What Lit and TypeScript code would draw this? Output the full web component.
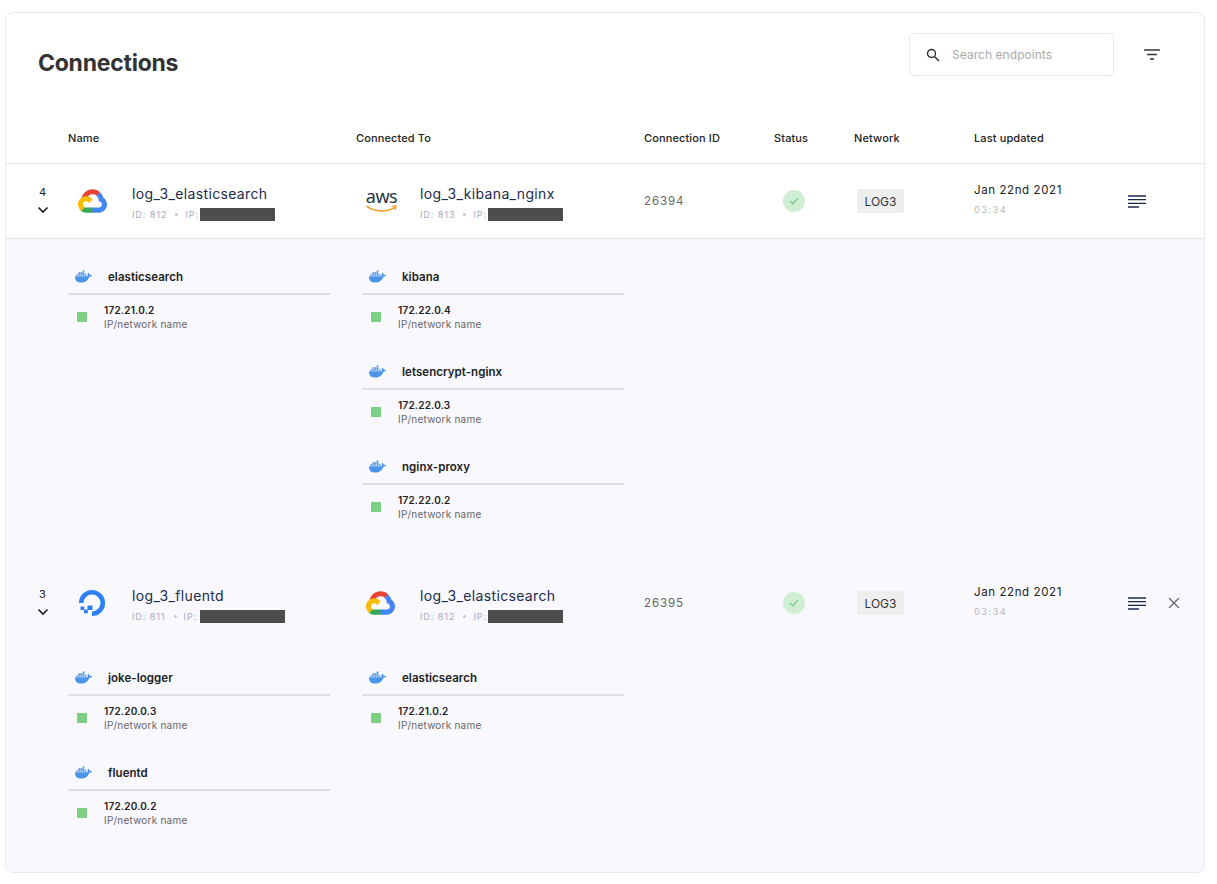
import { LitElement, html, css, svg } from "lit";
import { customElement } from "lit/decorators.js";

const gcp = html`<svg class="gcp" viewBox="0 0 256 206"><path fill="#EA4335" d="M170.252 56.819l22.253-22.253 1.483-9.37C153.437-11.677 88.976-7.496 52.42 33.92 42.267 45.423 34.734 59.764 30.717 74.573l7.97-1.123 44.505-7.34 3.436-3.513c19.797-21.742 53.27-24.667 76.128-6.168l7.496.39z"/><path fill="#4285F4" d="M224.205 73.918c-5.115-18.836-15.616-35.769-30.217-48.722l-31.232 31.232c13.188 10.776 20.701 27.01 20.379 44.037v5.544c15.351 0 27.797 12.445 27.797 27.796 0 15.352-12.446 27.485-27.797 27.485h-55.671l-5.466 5.934v33.34l5.466 5.231h55.671c39.93.311 72.552-31.494 72.863-71.424.188-24.203-11.745-46.893-31.793-60.453"/><path fill="#34A853" d="M71.87 205.796h55.593V161.29H71.87c-3.961-.001-7.797-.852-11.399-2.498l-7.887 2.42-22.409 22.253-1.952 7.574c12.567 9.489 27.9 14.825 43.647 14.757"/><path fill="#FBBC05" d="M71.87 61.425C31.94 61.664-.237 94.228.001 134.159c.133 22.298 10.547 43.288 28.222 56.881l32.248-32.248c-13.991-6.321-20.208-22.786-13.887-36.776 6.32-13.99 22.786-20.207 36.775-13.887 6.161 2.784 11.095 7.719 13.88 13.887l32.248-32.248C115.21 71.375 94.28 61.315 71.87 61.425"/></svg>`;

const aws = html`<span class="aws"><span class="aws-t">aws</span><svg viewBox="0 0 32 8"><path d="M1 1.2C9 7 21 7.6 29.5 2.6" fill="none" stroke="#f79c1f" stroke-width="1.6" stroke-linecap="round"/><path d="M26.4 1.4L31 .9 30 5" fill="none" stroke="#f79c1f" stroke-width="1.3"/></svg></span>`;

const dgo = html`<svg class="dgo" viewBox="0 0 28 28"><path d="M3.2 14A10.8 10.8 0 1 1 14 24.8" fill="none" stroke="#2f80f6" stroke-width="4.6"/><rect x="9.500" y="16.500" width="5" height="4.500" fill="#2f80f6"/><rect x="6" y="20.500" width="3.800" height="3.800" fill="#2f80f6"/><rect x="2.500" y="17.500" width="3.800" height="3.500" fill="#2f80f6"/></svg>`;

const dockerPath = "M13.983 11.078h2.119a.186.186 0 00.186-.185V9.006a.186.186 0 00-.186-.186h-2.119a.185.185 0 00-.185.185v1.888c0 .102.083.185.185.185m-2.954-5.43h2.118a.186.186 0 00.186-.186V3.574a.186.186 0 00-.186-.185h-2.118a.185.185 0 00-.185.185v1.888c0 .102.082.185.185.186m0 2.716h2.118a.187.187 0 00.186-.186V6.29a.186.186 0 00-.186-.185h-2.118a.185.185 0 00-.185.185v1.887c0 .102.082.185.185.186m-2.93 0h2.12a.186.186 0 00.184-.186V6.29a.185.185 0 00-.185-.185H8.1a.185.185 0 00-.185.185v1.887c0 .102.083.185.185.186m-2.964 0h2.119a.186.186 0 00.185-.186V6.29a.185.185 0 00-.185-.185H5.136a.186.186 0 00-.186.185v1.887c0 .102.084.185.186.186m5.893 2.715h2.118a.186.186 0 00.186-.185V9.006a.186.186 0 00-.186-.186h-2.118a.185.185 0 00-.185.185v1.888c0 .102.082.185.185.185m-2.93 0h2.12a.185.185 0 00.184-.185V9.006a.185.185 0 00-.184-.186h-2.12a.185.185 0 00-.184.185v1.888c0 .102.083.185.185.185m-2.964 0h2.119a.185.185 0 00.185-.185V9.006a.185.185 0 00-.184-.186h-2.12a.186.186 0 00-.186.186v1.887c0 .102.084.185.186.185m-2.92 0h2.12a.185.185 0 00.184-.185V9.006a.185.185 0 00-.184-.186h-2.12a.185.185 0 00-.184.185v1.888c0 .102.082.185.185.185M23.763 9.89c-.065-.051-.672-.51-1.954-.51-.338.001-.676.03-1.01.087-.248-1.7-1.653-2.53-1.716-2.566l-.344-.199-.226.327c-.284.438-.49.922-.612 1.43-.23.97-.09 1.882.403 2.661-.595.332-1.55.413-1.744.42H.751a.751.751 0 00-.75.748 11.376 11.376 0 00.692 4.062c.545 1.428 1.355 2.48 2.41 3.124 1.18.723 3.1 1.137 5.275 1.137.983.003 1.963-.086 2.93-.266a12.248 12.248 0 003.823-1.389c.98-.567 1.86-1.288 2.61-2.136 1.252-1.418 1.998-2.997 2.553-4.4h.221c1.372 0 2.215-.549 2.68-1.009.309-.293.55-.65.707-1.046l.098-.288Z";
const docker = svg`<path d=${dockerPath} fill="#4a94ea"/>`;

type Ep = { logo: unknown; name: string; id: number; redact: number };
type Group = { name: string; ip: string };
type Conn = {
  count: number; from: Ep; to: Ep; cid: number; close: boolean; shaded: boolean;
  left: Group[]; right: Group[];
};

const data: Conn[] = [
  {
    count: 4, cid: 26394, close: false, shaded: false,
    from: { logo: gcp, name: "log_3_elasticsearch", id: 812, redact: 75 },
    to: { logo: aws, name: "log_3_kibana_nginx", id: 813, redact: 75 },
    left: [{ name: "elasticsearch", ip: "172.21.0.2" }],
    right: [
      { name: "kibana", ip: "172.22.0.4" },
      { name: "letsencrypt-nginx", ip: "172.22.0.3" },
      { name: "nginx-proxy", ip: "172.22.0.2" },
    ],
  },
  {
    count: 3, cid: 26395, close: true, shaded: true,
    from: { logo: dgo, name: "log_3_fluentd", id: 811, redact: 85 },
    to: { logo: gcp, name: "log_3_elasticsearch", id: 812, redact: 75 },
    left: [
      { name: "joke-logger", ip: "172.20.0.3" },
      { name: "fluentd", ip: "172.20.0.2" },
    ],
    right: [{ name: "elasticsearch", ip: "172.21.0.2" }],
  },
];

@customElement("app-root")
export class AppRoot extends LitElement {
  static styles = css`
    :host { display: block; font-family: Inter, "Liberation Sans", sans-serif; color: #222; }
    .card { margin: 12px 12px 11px 5px; border: 1px solid #e9e9f1; border-radius: 8px; background: #fff; overflow: hidden; }
    .top { height: 99px; display: flex; padding-left: 32px; box-sizing: border-box; }
    h1 { margin: 36px 0 0; font-size: 23px; line-height: 28px; font-weight: 700; color: #333; letter-spacing: -0.25px; flex: 1; }
    .search { margin-top: 20px; width: 205px; height: 43px; box-sizing: border-box; border: 1px solid #ebebef; border-radius: 4px; display: flex; align-items: center; padding-left: 16px; gap: 12px; font-size: 12px; color: #aaa; letter-spacing: 0.05px; }
    .search svg { width: 14px; height: 14px; flex: none; }
    .filter { margin: 35px 44px 0 30px; width: 16px; height: 14px; flex: none; }
    .grid { display: grid; grid-template-columns: 62px 288px 288px 130px 80px 120px 154px 1fr; align-items: center; }
    .head { height: 51px; border-bottom: 1px solid #e3e3e8; font-size: 11px; font-weight: 500; letter-spacing: 0.12px; color: #222; line-height: 14px; }
    .row { height: 74px; }
    .row.line { height: 75px; border-bottom: 1px solid #e3e3e8; box-sizing: border-box; }
    .shaded { background: #f8f8fd; }
    .count { display: flex; flex-direction: column; align-items: center; padding-left: 11px; font-size: 11px; line-height: 14px; color: #222; margin-top: -3px; }
    .count svg { width: 12px; height: 8px; margin-top: 7px; }
    .ep { display: flex; align-items: center; }
    .logo { width: 64px; flex: none; display: flex; padding-left: 10px; box-sizing: border-box; }
    .gcp { width: 29px; height: 24px; }
    .dgo { width: 28px; height: 28px; }
    .aws { display: flex; flex-direction: column; width: 31px; align-items: center; }
    .aws-t { font-family: "Noto Sans", sans-serif; font-size: 18px; line-height: 15px; height: 16px; color: #2b3445; letter-spacing: -0.5px; }
    .aws svg { width: 31px; height: 8px; margin-top: 0; }
    .ep-text { margin-top: 4px; }
    .ep-name { font-size: 14px; line-height: 18px; color: #1c2a4f; letter-spacing: 0.35px; }
    .meta { display: flex; align-items: center; height: 14px; margin-top: 4px; font-size: 9px; letter-spacing: 0.95px; color: #a3abc4; }
    .meta-label { width: 68px; flex: none; display: flex; align-items: center; }
    .dot { width: 3px; height: 3px; border-radius: 50%; background: #c4c9da; margin: 0 7px 0 8px; }
    .redact { height: 13px; background: #4d4d4d; }
    .cid { font-size: 11.500px; letter-spacing: 0.9px; color: #666; }
    .status { width: 22px; height: 22px; border-radius: 50%; background: #d0eed4; margin-left: 9px; display: flex; align-items: center; justify-content: center; }
    .status svg { width: 10px; height: 8px; }
    .badge { margin-left: 3px; width: 47px; height: 24px; background: #eeeeee; border-radius: 2px; font-size: 12px; color: #333; display: flex; align-items: center; justify-content: center; }
    .date { font-size: 11.500px; letter-spacing: 0.6px; line-height: 14px; color: #222; margin-top: -4px; }
    .time { font-size: 9.500px; letter-spacing: 1.3px; line-height: 12px; color: #b9b9b9; margin-top: 7px; }
    .actions { display: flex; align-items: center; gap: 22px; }
    .menu { width: 18px; height: 13px; }
    .close { width: 12px; height: 12px; }
    .detail { background: #f8f8fd; display: flex; gap: 32px; padding: 21px 0 21px 62px; }
    .col { width: 262px; display: flex; flex-direction: column; }
    .group { height: 95px; }
    .g-head { height: 33px; border-bottom: 2px solid #dfdfe2; display: flex; align-items: center; padding-left: 7px; font-size: 11.500px; font-weight: 600; color: #222; letter-spacing: 0.05px; }
    .g-head svg { width: 17px; height: 17px; margin-right: 16px; flex: none; margin-top: -1px; }
    .g-body { display: flex; align-items: center; padding: 8px 0 0 9px; }
    .sq { width: 10px; height: 10px; background: #7dcf84; border-radius: 1px; margin-right: 17px; flex: none; }
    .ip { font-size: 10px; font-weight: 600; line-height: 14px; color: #222; letter-spacing: 0.2px; }
    .sub { font-size: 10px; line-height: 14px; color: #666; letter-spacing: 0.22px; }
  `;

  private endpoint(e: Ep) {
    return html`<div class="ep">
      <div class="logo">${e.logo}</div>
      <div class="ep-text">
        <div class="ep-name">${e.name}</div>
        <div class="meta"><span class="meta-label">ID: ${e.id}<span class="dot"></span>IP:</span><span class="redact" style="width:${e.redact}px"></span></div>
      </div>
    </div>`;
  }

  private group(g: Group) {
    return html`<div class="group">
      <div class="g-head"><svg viewBox="0 0 24 24">${docker}</svg>${g.name}</div>
      <div class="g-body"><span class="sq"></span><div><div class="ip">${g.ip}</div><div class="sub">IP/network name</div></div></div>
    </div>`;
  }

  private conn(c: Conn) {
    return html`
      <div class="grid row ${c.shaded ? "shaded" : "line"}">
        <div class="count">${c.count}<svg viewBox="0 0 12 8"><path d="M1.500 1.500L6 6l4.500-4.500" fill="none" stroke="#222" stroke-width="1.700"/></svg></div>
        ${this.endpoint(c.from)}
        ${this.endpoint(c.to)}
        <div class="cid">${c.cid}</div>
        <div><div class="status"><svg viewBox="0 0 10 8"><path d="M1 4l2.800 2.800L9 1.200" fill="none" stroke="#74c97e" stroke-width="1.200"/></svg></div></div>
        <div><div class="badge">LOG3</div></div>
        <div><div class="date">Jan 22nd 2021</div><div class="time">03:34</div></div>
        <div class="actions">
          <svg class="menu" viewBox="0 0 18 13"><path d="M0 1h18M0 4.700h18M0 8.300h18M0 12h11" stroke="#1c2a4f" stroke-width="1.300" fill="none"/></svg>
          ${c.close ? html`<svg class="close" viewBox="0 0 12 12"><path d="M1 1l10 10M11 1L1 11" stroke="#666" stroke-width="1.300" fill="none"/></svg>` : null}
        </div>
      </div>
      <div class="detail">
        <div class="col">${c.left.map((g) => this.group(g))}</div>
        <div class="col">${c.right.map((g) => this.group(g))}</div>
      </div>`;
  }

  render() {
    return html`<div class="card">
      <div class="top">
        <h1>Connections</h1>
        <div class="search">
          <svg viewBox="0 0 14 14"><circle cx="5.500" cy="5.500" r="4" fill="none" stroke="#333" stroke-width="1.400"/><path d="M8.500 8.500L13 13" stroke="#333" stroke-width="1.500"/></svg>
          Search endpoints
        </div>
        <svg class="filter" viewBox="0 0 16 14"><path d="M0 2h16M3 6.500h10M6 11h4" stroke="#333" stroke-width="1.500" fill="none"/></svg>
      </div>
      <div class="grid head">
        <div></div><div>Name</div><div>Connected To</div><div>Connection ID</div><div>Status</div><div>Network</div><div>Last updated</div><div></div>
      </div>
      ${data.map((c) => this.conn(c))}
    </div>`;
  }
}
